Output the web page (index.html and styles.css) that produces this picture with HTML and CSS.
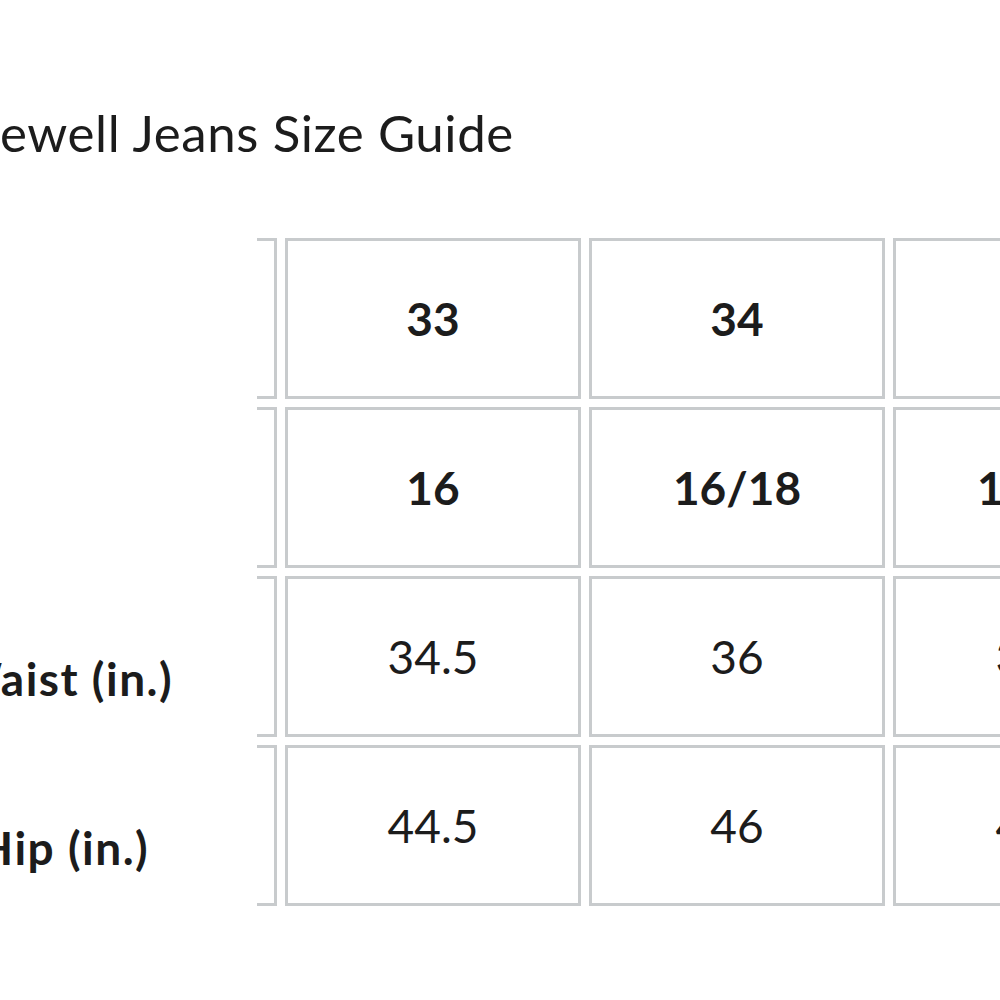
FILE: index.html
```html
<!DOCTYPE html>
<html>
<head>
<meta charset="utf-8">
<link rel="stylesheet" href="styles.css">
</head>
<body>
<div class="page">
  <h1 class="title">ewell Jeans Size Guide</h1>
  <div class="grid">
    <div class="rowhead"><span class="label"></span><span class="stub"></span></div>
    <div class="cell bold">33</div>
    <div class="cell bold">34</div>
    <div class="cell bold">35</div>

    <div class="rowhead"><span class="label"></span><span class="stub"></span></div>
    <div class="cell bold">16</div>
    <div class="cell bold">16/18</div>
    <div class="cell bold">18/20</div>

    <div class="rowhead"><span class="label">Waist (in.)</span><span class="stub"></span></div>
    <div class="cell">34.5</div>
    <div class="cell">36</div>
    <div class="cell">37.5</div>

    <div class="rowhead"><span class="label">Hip (in.)</span><span class="stub"></span></div>
    <div class="cell">44.5</div>
    <div class="cell">46</div>
    <div class="cell">47.5</div>
  </div>
</div>
</body>
</html>
```

FILE: styles.css
```css
html, body {
  margin: 0;
  padding: 0;
  background: #ffffff;
  overflow: hidden;
}

.page {
  width: 1000px;
  height: 1000px;
  overflow: hidden;
  font-family: "Lato", "Noto Sans", sans-serif;
  color: #1c1c1c;
}

.title {
  margin: 102px 0 0 0;
  font-size: 51px;
  line-height: 61px;
  font-weight: 400;
  letter-spacing: 0.6px;
  white-space: nowrap;
}

.grid {
  margin-top: 75px;
  margin-left: -146px;
  display: grid;
  grid-template-columns: 423px 296px 296px 296px;
  grid-auto-rows: 161px;
  column-gap: 8px;
  row-gap: 8px;
  width: max-content;
}

.rowhead {
  display: flex;
  align-items: stretch;
}

.label {
  flex: 1;
  display: flex;
  align-items: center;
  justify-content: center;
  padding-top: 44px;
  padding-left: 16px;
  font-size: 46px;
  font-weight: 700;
  letter-spacing: 1.5px;
  white-space: nowrap;
}

.stub {
  width: 17px;
  border: 3px solid #c8cbcd;
  border-left: none;
}

.cell {
  box-sizing: border-box;
  border: 3px solid #c8cbcd;
  display: flex;
  align-items: center;
  justify-content: center;
  font-size: 46px;
  font-weight: 400;
  white-space: nowrap;
}

.cell.bold {
  font-weight: 700;
}
```
